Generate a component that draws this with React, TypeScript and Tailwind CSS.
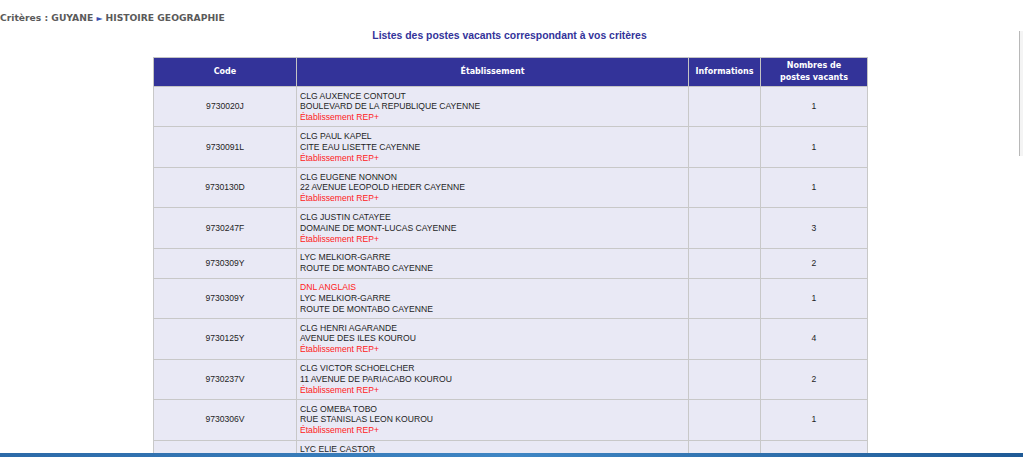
import React from "react";

type Row = { code: string; lines: { t: string; red?: boolean }[]; n: string };

const REP = { t: "Établissement REP+", red: true };

const rows: Row[] = [
  { code: "9730020J", lines: [{ t: "CLG AUXENCE CONTOUT" }, { t: "BOULEVARD DE LA REPUBLIQUE CAYENNE" }, REP], n: "1" },
  { code: "9730091L", lines: [{ t: "CLG PAUL KAPEL" }, { t: "CITE EAU LISETTE CAYENNE" }, REP], n: "1" },
  { code: "9730130D", lines: [{ t: "CLG EUGENE NONNON" }, { t: "22 AVENUE LEOPOLD HEDER CAYENNE" }, REP], n: "1" },
  { code: "9730247F", lines: [{ t: "CLG JUSTIN CATAYEE" }, { t: "DOMAINE DE MONT-LUCAS CAYENNE" }, REP], n: "3" },
  { code: "9730309Y", lines: [{ t: "LYC MELKIOR-GARRE" }, { t: "ROUTE DE MONTABO CAYENNE" }], n: "2" },
  { code: "9730309Y", lines: [{ t: "DNL ANGLAIS", red: true }, { t: "LYC MELKIOR-GARRE" }, { t: "ROUTE DE MONTABO CAYENNE" }], n: "1" },
  { code: "9730125Y", lines: [{ t: "CLG HENRI AGARANDE" }, { t: "AVENUE DES ILES KOUROU" }, REP], n: "4" },
  { code: "9730237V", lines: [{ t: "CLG VICTOR SCHOELCHER" }, { t: "11 AVENUE DE PARIACABO KOUROU" }, REP], n: "2" },
  { code: "9730306V", lines: [{ t: "CLG OMEBA TOBO" }, { t: "RUE STANISLAS LEON KOUROU" }, REP], n: "1" },
  { code: "9730008X", lines: [{ t: "LYC ELIE CASTOR" }, { t: "RUE DU DOCTEUR FLOCH KOUROU" }, { t: "Établissement REP+", red: true }], n: "1" },
];

export default function App() {
  return (
    <div className="w-[1023px] h-[457px] flex flex-col overflow-hidden bg-white">
      <div className="flex-1 flex overflow-hidden">
        <div className="flex-1 overflow-hidden">
          <div className="pt-[12px] pl-0 text-[9.2px] leading-[12px] font-bold text-[#5a5a5a] font-['DejaVu_Sans',Verdana,sans-serif]">
            Critères : GUYANE <span className="text-[#3a4fb0] text-[8px]">►</span>
            <span className="ml-[3px]">HISTOIRE GEOGRAPHIE</span>
          </div>
          <div className="mt-[5px] text-center text-[10.4px] leading-[12px] font-bold text-[#33339a] font-['Liberation_Sans',Arial,sans-serif]">
            Listes des postes vacants correspondant à vos critères
          </div>
          <div className="mt-[15px] pl-[153px]">
            <table className="border-collapse w-[714px] table-fixed font-['Liberation_Sans',Arial,sans-serif] text-[8.6px] text-[#1e1e1e]">
              <colgroup>
                <col className="w-[143px]" />
                <col className="w-[392px]" />
                <col className="w-[72px]" />
                <col className="w-[107px]" />
              </colgroup>
              <thead>
                <tr className="bg-[#333399] text-white font-['DejaVu_Sans',Verdana,sans-serif] font-bold text-[8px] leading-[12px]">
                  <th className="border border-[#c4c4c4] h-[29px] text-center font-bold">Code</th>
                  <th className="border border-[#c4c4c4] text-center font-bold">Établissement</th>
                  <th className="border border-[#c4c4c4] text-center font-bold">Informations</th>
                  <th className="border border-[#c4c4c4] text-center font-bold">
                    Nombres de
                    <br />
                    postes vacants
                  </th>
                </tr>
              </thead>
              <tbody>
                {rows.map((r, i) => (
                  <tr key={i} className="bg-[#e9e9f5]">
                    <td className="border border-[#c8c8c8] text-center align-middle">{r.code}</td>
                    <td className="border border-[#c8c8c8] px-[3px] py-[3.55px] leading-[10.8px]">
                      {r.lines.map((l, j) => (
                        <div key={j} className={l.red ? "text-[#ff1a1a]" : ""}>
                          {l.t}
                        </div>
                      ))}
                    </td>
                    <td className="border border-[#c8c8c8]"></td>
                    <td className="border border-[#c8c8c8] text-center align-middle">{r.n}</td>
                  </tr>
                ))}
              </tbody>
            </table>
          </div>
        </div>
        <div className="w-[4px] flex flex-col">
          <div className="h-[31px]" />
          <div className="h-[125px] border-l border-[#b8b8b8] bg-[#f4f4f4]" />
        </div>
      </div>
      <div className="h-[4px] bg-gradient-to-r from-[#2c6aa8] via-[#3f86c4] to-[#1f5a96]" />
    </div>
  );
}
